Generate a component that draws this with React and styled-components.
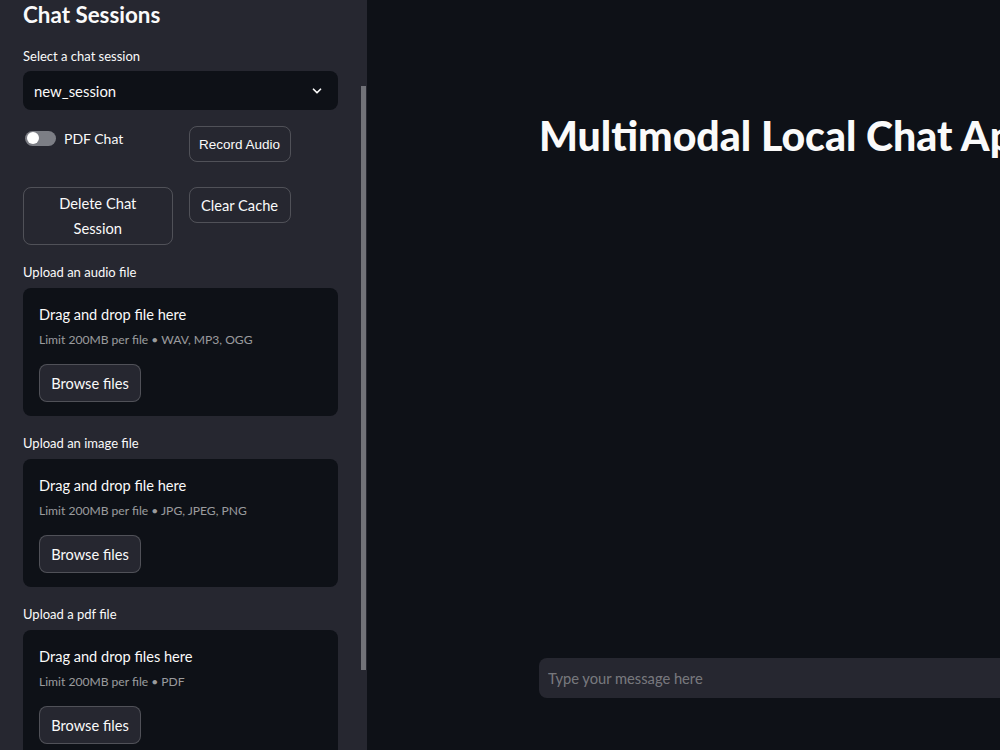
import React, { useEffect, useRef } from "react";
import styled, { createGlobalStyle } from "styled-components";

const Global = createGlobalStyle`
  html, body { margin: 0; padding: 0; background: #0e1117; overflow: hidden; }
  body { font-family: Lato, "Noto Sans", sans-serif; color: #fafafa; }
  * { box-sizing: border-box; }
`;

const Shell = styled.div`
  display: flex;
  width: 1000px;
  height: 750px;
  overflow: hidden;
  background: #0e1117;
`;

const SidebarFrame = styled.aside`
  position: relative;
  flex: 0 0 367px;
  height: 750px;
  background: #262730;
`;

const SideScroll = styled.div`
  height: 100%;
  overflow-y: scroll;
  scrollbar-width: none;
  &::-webkit-scrollbar { display: none; }
`;

const ScrollThumb = styled.div`
  position: absolute;
  right: 1px;
  top: 86px;
  width: 5px;
  height: 584px;
  background: #717278;
`;

const SideInner = styled.div`
  display: flex;
  flex-direction: column;
  padding: 110px 29px 96px 23px;
`;

const SideTitle = styled.h2`
  margin: 0;
  font-size: 22.4px;
  line-height: 30px;
  font-weight: 700;
  color: #fafafa;
`;

const Label = styled.div`
  font-size: 13px;
  line-height: 20px;
  color: #fafafa;
  margin-top: ${(p) => p.$top || 0}px;
  margin-bottom: ${(p) => p.$bottom ?? 6}px;
`;

const SelectBox = styled.div`
  height: 39px;
  border-radius: 8px;
  background: #0e1117;
  display: flex;
  align-items: center;
  justify-content: space-between;
  padding: 0 14px 0 11px;
  font-size: 14.9px;
  color: #fafafa;
`;

const Columns = styled.div`
  display: grid;
  grid-template-columns: 1fr 1fr;
  column-gap: 16px;
  margin-top: ${(p) => p.$top}px;
  align-items: start;
`;

const ToggleRow = styled.label`
  display: flex;
  align-items: center;
  gap: 8px;
  height: 24px;
  padding-left: 2px;
  font-size: 14px;
  color: #fafafa;
`;

const Track = styled.span`
  position: relative;
  width: 31px;
  height: 15px;
  border-radius: 8px;
  background: #7c7e85;
  display: inline-block;
`;

const Knob = styled.span`
  position: absolute;
  left: 2px;
  top: 1.5px;
  width: 12px;
  height: 12px;
  border-radius: 50%;
  background: #ffffff;
`;

const OutlineButton = styled.button`
  display: inline-flex;
  align-items: center;
  justify-content: center;
  background: transparent;
  border: 1px solid rgba(250, 250, 250, 0.2);
  border-radius: 8px;
  color: #fafafa;
  font-family: ${(p) => (p.$arial ? '"Liberation Sans", Arial, sans-serif' : 'Lato, "Noto Sans", sans-serif')};
  font-size: ${(p) => (p.$arial ? 13.5 : 14.7)}px;
  line-height: 25px;
  white-space: ${(p) => (p.$wrap ? "normal" : "nowrap")};
  width: ${(p) => p.$w || "auto"};
  height: ${(p) => p.$h}px;
  padding: 0 8px;
  text-align: center;
  cursor: pointer;
`;

const Dropzone = styled.div`
  background: #0e1117;
  border-radius: 8px;
  height: 128px;
  padding: 15px 16px 14px;
  display: flex;
  flex-direction: column;
  align-items: flex-start;
`;

const DropTitle = styled.div`
  font-size: 14.6px;
  line-height: 24px;
  color: #fafafa;
`;

const DropHint = styled.div`
  margin-top: 3px;
  font-size: 12.1px;
  line-height: 20px;
  color: rgba(250, 250, 250, 0.6);
`;

const BrowseButton = styled.button`
  margin-top: 14px;
  height: 38px;
  width: 102px;
  border-radius: 8px;
  border: 1px solid rgba(250, 250, 250, 0.2);
  background: #262730;
  color: #fafafa;
  font-family: Lato, "Noto Sans", sans-serif;
  font-size: 14.6px;
  padding: 0;
  cursor: pointer;
`;

const Section = styled.div`
  display: flex;
  flex-direction: column;
  margin-top: ${(p) => p.$top}px;
`;

const Main = styled.main`
  flex: 1;
  height: 750px;
  overflow: hidden;
  display: flex;
  flex-direction: column;
  justify-content: space-between;
  padding: 108px 0 52px 172px;
`;

const Title = styled.h1`
  margin: 0;
  font-size: 41px;
  line-height: 56px;
  font-weight: 900;
  white-space: nowrap;
  color: #fafafa;
  width: 736px;
`;

const ChatInput = styled.div`
  width: 736px;
  height: 40px;
  border-radius: 8px;
  background: #262730;
  display: flex;
  align-items: center;
  padding-left: 9px;
  font-size: 14.7px;
  color: rgba(250, 250, 250, 0.4);
  flex-shrink: 0;
`;

const Chevron = () => (
  <svg width="14" height="14" viewBox="0 0 24 24" fill="none" stroke="#fafafa" strokeWidth="3" strokeLinecap="round" strokeLinejoin="round">
    <path d="M6 9l6 6 6-6" />
  </svg>
);

const uploads = [
  { label: "Upload an audio file", title: "Drag and drop file here", hint: "Limit 200MB per file • WAV, MP3, OGG" },
  { label: "Upload an image file", title: "Drag and drop file here", hint: "Limit 200MB per file • JPG, JPEG, PNG" },
  { label: "Upload a pdf file", title: "Drag and drop files here", hint: "Limit 200MB per file • PDF" },
];

export default function App() {
  const sideRef = useRef(null);
  useEffect(() => {
    if (sideRef.current) sideRef.current.scrollTop = 110;
  }, []);
  return (
    <>
      <Global />
      <Shell>
        <SidebarFrame>
          <SideScroll ref={sideRef}>
            <SideInner>
              <SideTitle>Chat Sessions</SideTitle>
              <Label $top={16} $bottom={5}>Select a chat session</Label>
              <SelectBox>
                <span>new_session</span>
                <Chevron />
              </SelectBox>
              <Columns $top={16}>
                <ToggleRow>
                  <Track><Knob /></Track>
                  PDF Chat
                </ToggleRow>
                <div>
                  <OutlineButton $arial $h={36} $w="102px">Record Audio</OutlineButton>
                </div>
              </Columns>
              <Columns $top={25}>
                <OutlineButton $wrap $h={58} $w="100%">Delete Chat<br />Session</OutlineButton>
                <div>
                  <OutlineButton $h={36} $w="102px">Clear Cache</OutlineButton>
                </div>
              </Columns>
              {uploads.map((u) => (
                <Section key={u.label} $top={17}>
                  <Label>{u.label}</Label>
                  <Dropzone>
                    <DropTitle>{u.title}</DropTitle>
                    <DropHint>{u.hint}</DropHint>
                    <BrowseButton>Browse files</BrowseButton>
                  </Dropzone>
                </Section>
              ))}
            </SideInner>
          </SideScroll>
          <ScrollThumb />
        </SidebarFrame>
        <Main>
          <Title>Multimodal Local Chat App</Title>
          <ChatInput>Type your message here</ChatInput>
        </Main>
      </Shell>
    </>
  );
}
